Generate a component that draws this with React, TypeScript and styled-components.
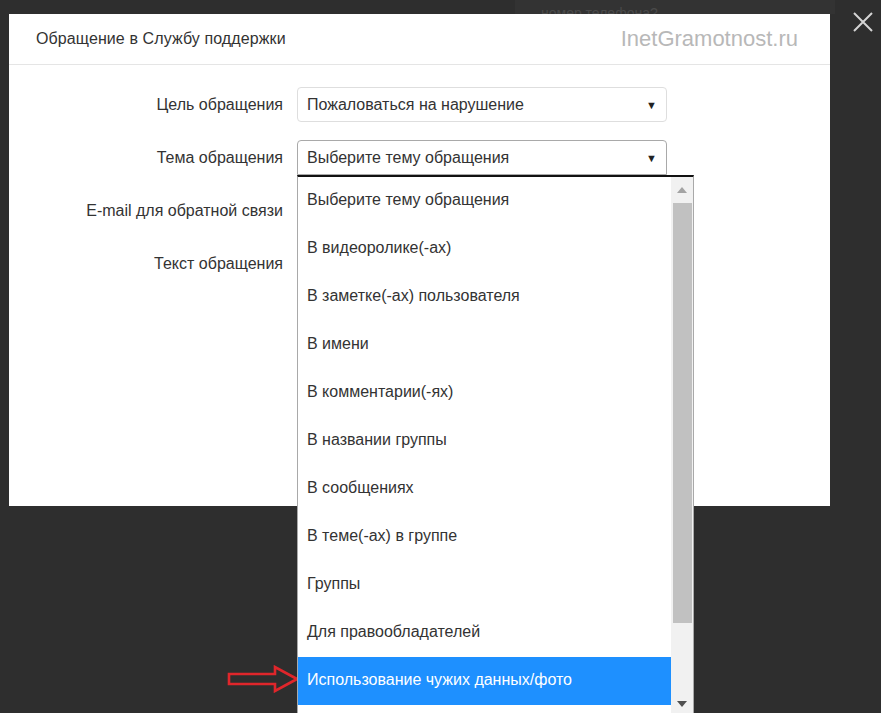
import React from "react";
import styled, { createGlobalStyle } from "styled-components";

const GlobalStyle = createGlobalStyle`
  html, body {
    margin: 0;
    padding: 0;
    background: #2e2e2e;
    font-family: "Liberation Sans", Arial, sans-serif;
  }
`;

const topics = [
  "Выберите тему обращения",
  "В видеоролике(-ах)",
  "В заметке(-ах) пользователя",
  "В имени",
  "В комментарии(-ях)",
  "В названии группы",
  "В сообщениях",
  "В теме(-ах) в группе",
  "Группы",
  "Для правообладателей",
  "Использование чужих данных/фото",
  "",
];

export default function App() {
  return <Page>
    <GlobalStyle />
    <BehindPanel>
      <BehindText>номер телефона?</BehindText>
    </BehindPanel>

    <Modal>
      <Header>
        <Title>Обращение в Службу поддержки</Title>
        <Watermark>InetGramotnost.ru</Watermark>
      </Header>

      <Form>
        <Label>Цель обращения</Label>
        <Select>
          <span>Пожаловаться на нарушение</span>
          <Caret>▼</Caret>
        </Select>

        <Label>Тема обращения</Label>
        <SelectCell>
          <Select $open>
            <span>Выберите тему обращения</span>
            <Caret>▼</Caret>
          </Select>
          <Dropdown>
            <List>
              {topics.map((t, i) => (
                <Option key={i} $active={i === 10}>{t}</Option>
              ))}
            </List>
            <Scrollbar>
              <ScrollArrow viewBox="0 0 10 6"><path d="M0 6 L5 0 L10 6 Z" /></ScrollArrow>
              <Thumb />
              <ScrollArrow viewBox="0 0 10 6" $down><path d="M0 0 L10 0 L5 6 Z" /></ScrollArrow>
            </Scrollbar>
          </Dropdown>
        </SelectCell>

        <Label>E-mail для обратной связи</Label>
        <Input />

        <Label>Текст обращения</Label>
        <TextArea />
      </Form>
    </Modal>

    <Close>
      <svg width="20" height="20" viewBox="0 0 20 20">
        <path d="M1 1 L19 19 M19 1 L1 19" stroke="#d4d4d4" strokeWidth="2" />
      </svg>
    </Close>

    <Pointer width="72" height="28" viewBox="0 0 72 28">
      <path d="M2 9 H48 V2 L70 14 L48 26 V19 H2 Z" fill="none" stroke="#e0262b" strokeWidth="2.6" strokeLinejoin="miter" />
    </Pointer>
  </Page>;
}

const Page = styled.div`
  position: relative;
  width: 881px;
  height: 713px;
  overflow: hidden;
  padding: 14px 0 0 9px;
  box-sizing: border-box;
`;

const BehindPanel = styled.div`
  position: absolute;
  left: 515px;
  top: 0;
  width: 320px;
  height: 14px;
  background: #333;
  overflow: hidden;
`;

const BehindText = styled.div`
  position: absolute;
  left: 26px;
  top: 6px;
  font-size: 14px;
  line-height: 14px;
  color: #4a4a4a;
`;

const Modal = styled.div`
  position: relative;
  width: 821px;
  height: 492px;
  background: #fff;
`;

const Header = styled.div`
  height: 50px;
  border-bottom: 1px solid #e5e5e5;
  display: flex;
  align-items: center;
  justify-content: space-between;
  padding: 0 32px 0 27px;
`;

const Title = styled.div`
  font-size: 16px;
  color: #333;
  letter-spacing: 0.1px;
`;

const Watermark = styled.div`
  font-size: 22px;
  color: #b8b8b8;
`;

const Form = styled.div`
  display: grid;
  grid-template-columns: 274px 370px;
  column-gap: 14px;
  row-gap: 18px;
  padding-top: 22px;
  grid-auto-rows: 35px;
`;

const Label = styled.div`
  font-size: 16px;
  color: #333;
  text-align: right;
  line-height: 35px;
`;

const SelectCell = styled.div`
  position: relative;
`;

const Select = styled.div<{ $open?: boolean }>`
  height: 35px;
  box-sizing: border-box;
  border: 1px solid ${p => (p.$open ? "#a9a9a9" : "#dedede")};
  border-radius: ${p => (p.$open ? "4px 4px 0 0" : "4px")};
  display: flex;
  align-items: center;
  justify-content: space-between;
  padding: 0 9px 0 9px;
  font-size: 16px;
  color: #333;
  background: #fff;
`;

const Caret = styled.span`
  font-size: 11px;
  color: #222;
`;

const Input = styled.div`
  height: 35px;
  box-sizing: border-box;
  border: 1px solid #dedede;
  border-radius: 4px;
`;

const TextArea = styled(Input)`
  height: 120px;
`;

const Dropdown = styled.div`
  position: absolute;
  left: 0;
  top: 100%;
  width: 395px;
  height: 560px;
  background: #fff;
  border-top: 2px solid #111;
  border-left: 1px solid #a9a9a9;
  border-right: 1px solid #a9a9a9;
  display: flex;
  z-index: 5;
`;

const List = styled.div`
  flex: 1;
  display: flex;
  flex-direction: column;
`;

const Option = styled.div<{ $active?: boolean }>`
  height: 48px;
  flex: none;
  display: flex;
  align-items: center;
  padding: 0 0 3px 9px;
  box-sizing: border-box;
  font-size: 16px;
  color: ${p => (p.$active ? "#fff" : "#333")};
  background: ${p => (p.$active ? "#1e90ff" : "#fff")};
`;

const Scrollbar = styled.div`
  width: 22px;
  height: 537px;
  background: #f1f1f1;
  display: flex;
  flex-direction: column;
  align-items: center;
`;

const ScrollArrow = styled.svg<{ $down?: boolean }>`
  width: 10px;
  height: 6px;
  fill: ${p => (p.$down ? "#505050" : "#a3a3a3")};
  margin: ${p => (p.$down ? "auto 0 7px" : "10px 0 0")};
`;

const Thumb = styled.div`
  width: 19px;
  height: 420px;
  background: #c1c1c1;
  margin-top: 10px;
`;

const Close = styled.div`
  position: absolute;
  left: 853px;
  top: 12px;
`;

const Pointer = styled.svg`
  position: absolute;
  left: 227px;
  top: 665px;
`;
